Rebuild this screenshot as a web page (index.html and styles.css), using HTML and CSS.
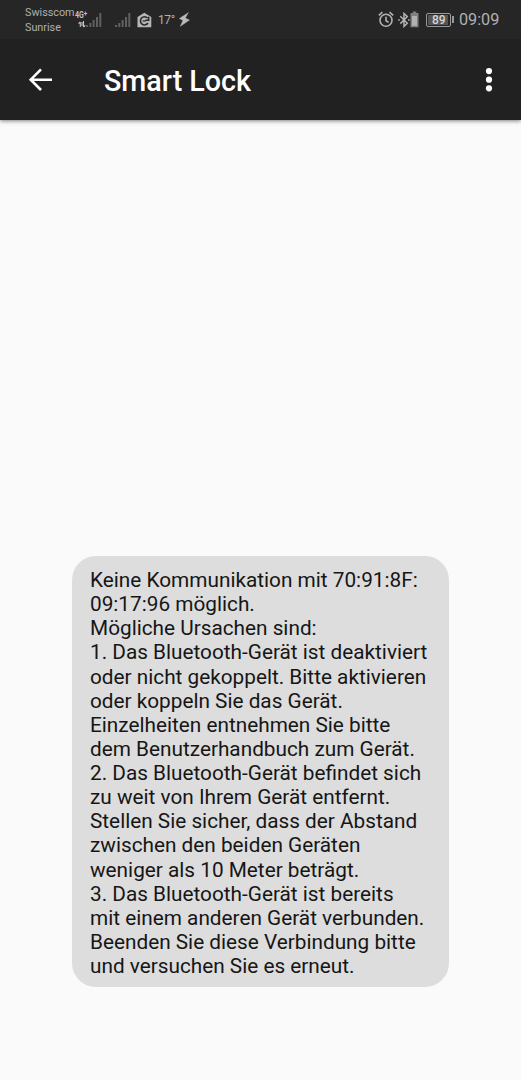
FILE: index.html
```html
<!DOCTYPE html>
<html lang="de">
<head>
<meta charset="utf-8">
<title>Smart Lock</title>
<link rel="stylesheet" href="styles.css">
</head>
<body>
<header class="top">
  <div class="status">
    <div class="carriers"><span>Swisscom</span><span>Sunrise</span></div>
    <div class="network"><span class="net-type">4G<sup>+</sup></span>
      <svg class="traffic" width="8" height="7" viewBox="0 0 8 7"><path d="M2.3 6V1M.6 2.7 2.3.8M5.5 0v6M7.2 4.3 5.5 6.2M4 1v4" fill="none" stroke="#c4c4c4" stroke-width="1.1"/></svg>
    </div>
    <svg class="signal" width="16" height="16" viewBox="0 0 16 16" fill="#606060"><path d="M0 13h2v2H0zM3.3 11h2v4h-2zM6.6 8h2v7h-2zM10 5h2v10h-2zM13.3 1h2v14h-2z"/></svg>
    <svg class="signal second" width="16" height="16" viewBox="0 0 16 16" fill="#606060"><path d="M0 13h2v2H0zM3.3 11h2v4h-2zM6.6 8h2v7h-2zM10 5h2v10h-2zM13.3 1h2v14h-2z"/></svg>
    <svg class="house" width="15" height="16" viewBox="0 0 15 16"><path d="M7.3.7 14.3 5v10.2H.5V5z" fill="#b6b6b6"/><path d="M10.6 6.1A4.1 4.1 0 1 0 11 11M11.7 4.8v3.5H8.3" fill="none" stroke="#272727" stroke-width="1.5"/><path d="M5.6 9h3.2" stroke="#272727" stroke-width="1.2"/></svg>
    <span class="temp">17°</span>
    <svg class="bolt" width="11" height="15" viewBox="0 0 11 15"><path d="M9.3.7.4 6.5 4 8.4l-2.7 5.9 9.1-6.2-4.2-2z" fill="#bababa" stroke="#bababa" stroke-width=".5"/></svg>
    <svg class="alarm" width="16" height="17" viewBox="0 0 16 17" fill="none" stroke="#b2b2b2" stroke-width="1.6"><circle cx="8" cy="9.3" r="6"/><path d="M8 5.8v3.9l2.6 1.7M.8 4.3 4.4 1.2M15.2 4.3l-3.6-3.1"/></svg>
    <svg class="bluetooth" width="12" height="16" viewBox="0 0 12 16" fill="none" stroke="#b2b2b2" stroke-width="1.5"><path d="m2.3 4.3 7 7L6 14.4V1.5l3.3 3.1-7 7M.2 8h1.6M10 8h1.6"/></svg>
    <svg class="cell" width="9" height="17" viewBox="0 0 9 17"><path d="M2.8.5h3.4V2h2.3v14.2H.5V2h2.3z" fill="#808080"/><path d="M2 5h5v9.8H2z" fill="#b0b0b0"/></svg>
    <div class="battery"><span>89</span></div><i class="nub"></i>
    <span class="clock">09:09</span>
  </div>
  <div class="appbar">
    <svg class="back" width="24" height="24" viewBox="0 0 24 24" fill="none" stroke="#fff" stroke-width="2.6"><path d="M24 11.7H3M13 1.4 2.7 11.7 13 22"/></svg>
    <h1>Smart Lock</h1>
    <svg class="more" width="8" height="26" viewBox="0 0 8 26" fill="#fff"><circle cx="4" cy="4.1" r="3.1"/><circle cx="4" cy="12.7" r="3.1"/><circle cx="4" cy="21.3" r="3.1"/></svg>
  </div>
</header>
<main>
  <p class="toast">Keine Kommunikation mit 70:91:8F:<br>09:17:96 möglich.<br>Mögliche Ursachen sind:<br>1. Das Bluetooth-Gerät ist deaktiviert<br>oder nicht gekoppelt. Bitte aktivieren<br>oder koppeln Sie das Gerät.<br>Einzelheiten entnehmen Sie bitte<br>dem Benutzerhandbuch zum Gerät.<br>2. Das Bluetooth-Gerät befindet sich<br>zu weit von Ihrem Gerät entfernt.<br>Stellen Sie sicher, dass der Abstand<br>zwischen den beiden Geräten<br>weniger als 10 Meter beträgt.<br>3. Das Bluetooth-Gerät ist bereits<br>mit einem anderen Gerät verbunden.<br>Beenden Sie diese Verbindung bitte<br>und versuchen Sie es erneut.</p>
</main>
</body>
</html>
```
FILE: styles.css
```css
* { box-sizing: border-box; }
body {
  margin: 0;
  height: 1080px;
  display: flex;
  flex-direction: column;
  background: #fafafa;
  font-family: Roboto, "Liberation Sans", sans-serif;
  overflow: hidden;
}
svg { display: block; flex: none; }
.top {
  height: 120px;
  background: #212121;
  box-shadow: 0 1px 4px rgba(0, 0, 0, .5);
}
.status {
  height: 39px;
  display: flex;
  align-items: center;
  padding: 0 22px 0 25px;
  background: #262626;
  color: #b0b0b0;
}
.carriers {
  width: 50px;
  display: flex;
  flex-direction: column;
  font-size: 10.8px;
  line-height: 15px;
  white-space: nowrap;
  padding-top: 1px;
}
.network { width: 12px; height: 17px; }
.net-type {
  display: block;
  font-size: 9px;
  line-height: 9px;
  font-weight: 700;
  color: #c4c4c4;
  white-space: nowrap;
  transform: scaleX(.78);
  transform-origin: left;
}
.net-type sup { font-size: 8px; line-height: 0; vertical-align: 2px; }
.traffic { margin: 1px 0 0 3px; }
.signal { margin-left: -1px; }
.second { margin-left: 13px; }
.house { margin-left: 6px; }
.temp { width: 15px; margin-left: 6px; font-size: 12px; letter-spacing: -.4px; }
.bolt { margin-left: 6px; }
.alarm { margin-left: auto; }
.bluetooth { margin-left: 4px; }
.battery {
  width: 25px;
  height: 14px;
  margin-left: 7px;
  padding: 1px;
  border: 1px solid #999;
  border-radius: 2px;
}
.battery span {
  display: block;
  width: 20px;
  height: 10px;
  padding-left: 4px;
  background: #555;
  color: #d4d4d4;
  font-size: 12px;
  font-weight: 500;
  line-height: 10px;
}
.nub { width: 2px; height: 7px; margin-left: 1px; background: #999; }
.clock { width: 40px; margin-left: 5px; font-size: 16.2px; line-height: 20px; }
.appbar { height: 81px; display: flex; align-items: center; padding: 0 28px; }
h1 {
  margin: 2px 0 0 52px;
  color: #fff;
  font-size: 28.7px;
  font-weight: 500;
  line-height: 34px;
}
.more { margin-left: auto; }
main { flex: 1; display: flex; align-items: flex-end; padding: 0 72px 93px; }
.toast {
  width: 377px;
  height: 431px;
  flex: none;
  margin: 0;
  padding: 12px 0 0 18px;
  border-radius: 24px;
  background: #ddd;
  color: #161616;
  font-size: 20.77px;
  line-height: 24.12px;
  white-space: nowrap;
}
```
